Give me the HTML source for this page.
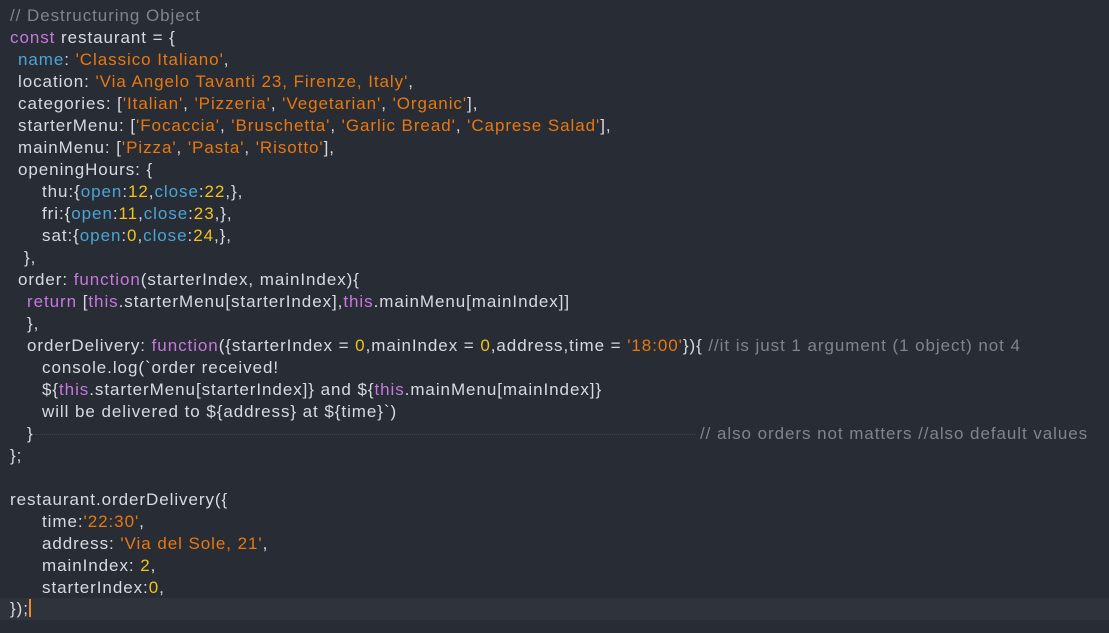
<!DOCTYPE html>
<html><head><meta charset="utf-8"><style>
html,body{margin:0;padding:0;background:#282c34;width:1109px;height:633px;overflow:hidden}
.l{position:absolute;height:22px;line-height:22px;font-family:"Liberation Sans","DejaVu Sans",sans-serif;font-size:17px;letter-spacing:0.94px;color:#d7dae0;white-space:pre}
.c{color:#7f848e}.k{color:#c678dd}.s{color:#e8780f}.n{color:#f0c419}.p{color:#4aa5d6}
.hl{position:absolute;left:0;top:598px;width:1109px;height:22px;background:#2e333c}
.cur{display:inline-block;width:2px;height:18px;background:#f08a24;vertical-align:-3px}
.dot{position:absolute;top:434px;left:35px;width:660px;border-top:1px dotted #3c414a}
.w{position:absolute;left:0;top:5px}
</style></head><body>
<div class="hl"></div>
<div class="dot"></div>
<div class="w">
<div class="l c" style="left:10px;top:0px">// Destructuring Object</div>
<div class="l" style="left:10px;top:22px"><span class="k">const</span> restaurant = {</div>
<div class="l" style="left:18px;top:44px"><span class="p">name</span>: <span class="s">'Classico Italiano'</span>,</div>
<div class="l" style="left:18px;top:66px">location: <span class="s">'Via Angelo Tavanti 23, Firenze, Italy'</span>,</div>
<div class="l" style="left:18px;top:88px">categories: [<span class="s">'Italian'</span>, <span class="s">'Pizzeria'</span>, <span class="s">'Vegetarian'</span>, <span class="s">'Organic'</span>],</div>
<div class="l" style="left:18px;top:110px">starterMenu: [<span class="s">'Focaccia'</span>, <span class="s">'Bruschetta'</span>, <span class="s">'Garlic Bread'</span>, <span class="s">'Caprese Salad'</span>],</div>
<div class="l" style="left:18px;top:132px">mainMenu: [<span class="s">'Pizza'</span>, <span class="s">'Pasta'</span>, <span class="s">'Risotto'</span>],</div>
<div class="l" style="left:18px;top:154px">openingHours: {</div>
<div class="l" style="left:42px;top:176px">thu:{<span class="p">open</span>:<span class="n">12</span>,<span class="p">close</span>:<span class="n">22</span>,},</div>
<div class="l" style="left:42px;top:198px">fri:{<span class="p">open</span>:<span class="n">11</span>,<span class="p">close</span>:<span class="n">23</span>,},</div>
<div class="l" style="left:42px;top:220px">sat:{<span class="p">open</span>:<span class="n">0</span>,<span class="p">close</span>:<span class="n">24</span>,},</div>
<div class="l" style="left:24px;top:242px">},</div>
<div class="l" style="left:18px;top:264px">order: <span class="k">function</span>(starterIndex, mainIndex){</div>
<div class="l" style="left:27px;top:286px"><span class="k">return</span> [<span class="k">this</span>.starterMenu[starterIndex],<span class="k">this</span>.mainMenu[mainIndex]]</div>
<div class="l" style="left:27px;top:308px">},</div>
<div class="l" style="left:27px;top:330px">orderDelivery: <span class="k">function</span>({starterIndex = <span class="n">0</span>,mainIndex = <span class="n">0</span>,address,time = <span class="s">'18:00'</span>}){ <span class="c">//it is just 1 argument (1 object) not 4</span></div>
<div class="l" style="left:42px;top:352px">console.log(`order received!</div>
<div class="l" style="left:42px;top:374px">${<span class="k">this</span>.starterMenu[starterIndex]} and ${<span class="k">this</span>.mainMenu[mainIndex]}</div>
<div class="l" style="left:42px;top:396px">will be delivered to ${address} at ${time}`)</div>
<div class="l" style="left:27px;top:418px">}</div>
<div class="l c" style="left:700px;top:418px">// also orders not matters //also default values</div>
<div class="l" style="left:10px;top:440px">};</div>
<div class="l" style="left:10px;top:484px">restaurant.orderDelivery({</div>
<div class="l" style="left:42px;top:506px">time:<span class="s">'22:30'</span>,</div>
<div class="l" style="left:42px;top:528px">address: <span class="s">'Via del Sole, 21'</span>,</div>
<div class="l" style="left:42px;top:550px">mainIndex: <span class="n">2</span>,</div>
<div class="l" style="left:42px;top:572px">starterIndex:<span class="n">0</span>,</div>
<div class="l" style="left:10px;top:593px">});<span class="cur"></span></div>
</div>
</body></html>
